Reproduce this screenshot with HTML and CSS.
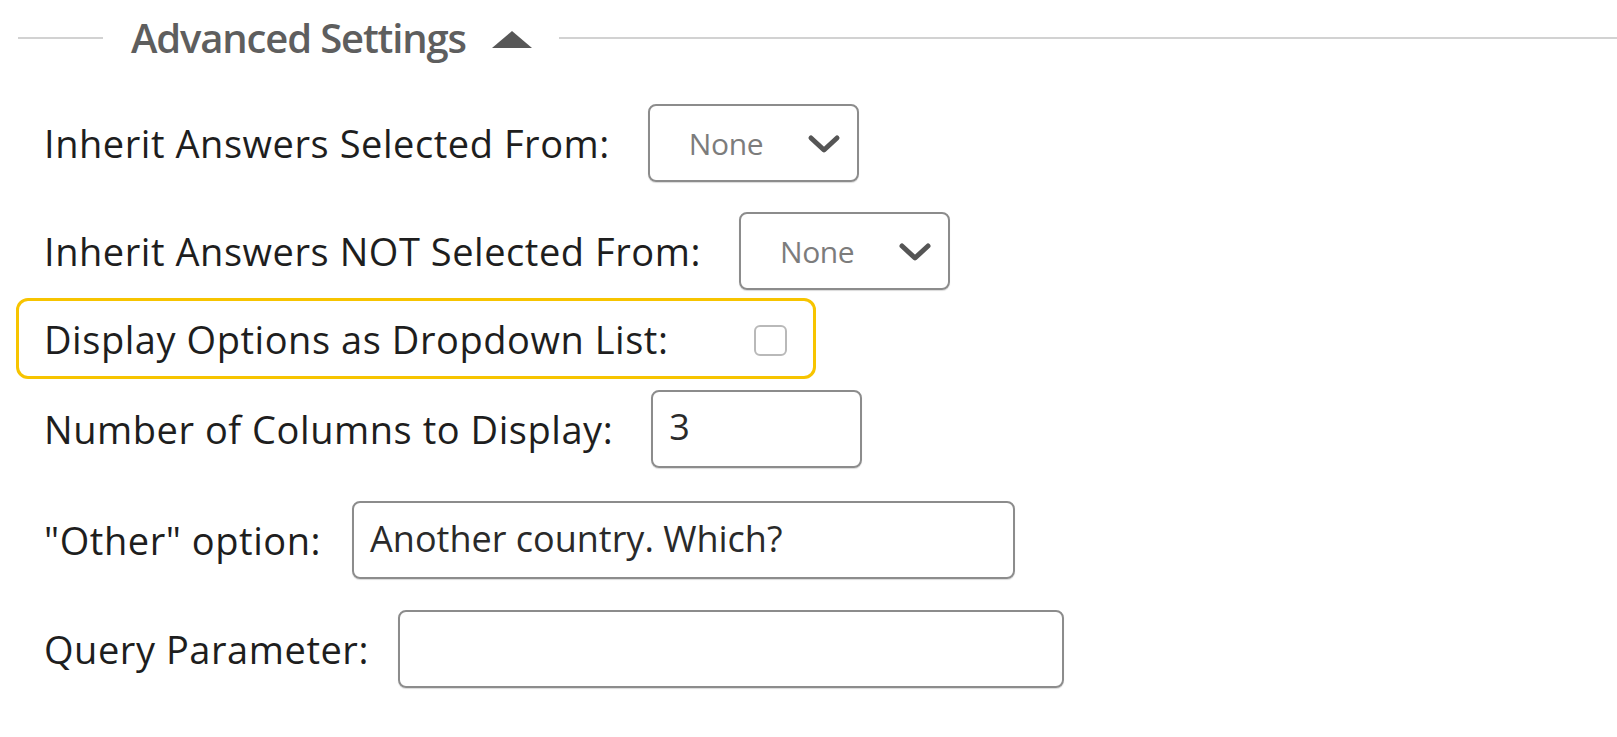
FILE: index.html
```html
<!DOCTYPE html>
<html lang="en">
<head>
<meta charset="utf-8">
<title>Advanced Settings</title>
<link rel="stylesheet" href="styles.css">
</head>
<body>
<div class="panel">
  <div class="legend">
    <span class="rule rule-short"></span>
    <span class="legend-title">Advanced Settings</span>
    <svg class="caret" width="40" height="17" viewBox="0 0 40 17"><polygon points="20,0 40,17 0,17" fill="#575757"/></svg>
    <span class="rule rule-long"></span>
  </div>

  <div class="row row-1">
    <label class="lbl">Inherit Answers Selected From:</label>
    <div class="select">
      <span class="select-text">None</span>
      <svg class="chev" width="34" height="22" viewBox="0 0 34 22"><polyline points="4,5 17,17 30,5" fill="none" stroke="#555" stroke-width="5" stroke-linecap="round" stroke-linejoin="round"/></svg>
    </div>
  </div>

  <div class="row row-2">
    <label class="lbl">Inherit Answers NOT Selected From:</label>
    <div class="select">
      <span class="select-text">None</span>
      <svg class="chev" width="34" height="22" viewBox="0 0 34 22"><polyline points="4,5 17,17 30,5" fill="none" stroke="#555" stroke-width="5" stroke-linecap="round" stroke-linejoin="round"/></svg>
    </div>
  </div>

  <div class="row row-hl">
    <label class="lbl">Display Options as Dropdown List:</label>
    <span class="check"></span>
  </div>

  <div class="row row-4">
    <label class="lbl">Number of Columns to Display:</label>
    <div class="field field-small">3</div>
  </div>

  <div class="row row-5">
    <label class="lbl">"Other" option:</label>
    <div class="field field-other">Another country. Which?</div>
  </div>

  <div class="row row-6">
    <label class="lbl">Query Parameter:</label>
    <div class="field field-query"></div>
  </div>
</div>
</body>
</html>
```

FILE: styles.css
```css
html, body {
  margin: 0;
  padding: 0;
  background: #ffffff;
}

body {
  font-family: "Open Sans", "Noto Sans", "DejaVu Sans", sans-serif;
  color: #1e1e1e;
}

.panel {
  display: flex;
  flex-direction: column;
  align-items: flex-start;
  width: 1617px;
  height: 737px;
  overflow: hidden;
}

.legend {
  display: flex;
  align-items: center;
  width: 100%;
  height: 76px;
}

.rule {
  height: 2px;
  background: #d2d2d2;
}

.rule-short {
  width: 85px;
  margin-left: 18px;
}

.rule-long {
  flex: 1;
  margin-left: 27px;
}

.legend-title {
  margin-left: 28px;
  font-size: 40px;
  font-weight: 600;
  color: #5e5e5e;
  letter-spacing: -1.15px;
  line-height: 1;
}

.caret {
  margin-left: 26px;
  margin-top: 2px;
}

.row {
  display: flex;
  align-items: center;
  padding-left: 44px;
}

.lbl {
  font-size: 38px;
  letter-spacing: 0.55px;
  line-height: 1;
  color: #1e1e1e;
  white-space: nowrap;
}

.row-1 { margin-top: 28px; }
.row-2 { margin-top: 30px; }
.row-4 { margin-top: 11px; }
.row-5 { margin-top: 33px; }
.row-6 { margin-top: 31px; }

.select {
  display: flex;
  align-items: center;
  justify-content: space-between;
  box-sizing: border-box;
  width: 211px;
  height: 78px;
  margin-left: 38px;
  padding: 0 16px 0 39px;
  border: 2px solid #8c8c8c;
  border-radius: 8px;
  box-shadow: 0 1px 1px rgba(0,0,0,0.15);
}

.select-text {
  font-size: 30px;
  color: #7c7c7c;
  letter-spacing: -0.4px;
}

.chev {
  margin-top: 2px;
}

.row-hl {
  margin-top: 8px;
  margin-left: 16px;
  padding: 0 26px 0 25px;
  height: 75px;
  border: 3px solid #f7c400;
  border-radius: 12px;
}

.check {
  box-sizing: border-box;
  width: 33px;
  height: 31px;
  margin-left: 86px;
  margin-top: 4px;
  border: 2px solid #b9b9b9;
  border-radius: 6px;
  background: #fff;
}

.field {
  box-sizing: border-box;
  height: 78px;
  display: flex;
  align-items: center;
  border: 2px solid #8c8c8c;
  border-radius: 8px;
  box-shadow: 0 1px 1px rgba(0,0,0,0.15);
  font-size: 36px;
  letter-spacing: 0;
  color: #2a2a2a;
  margin-left: 38px;
}

.field-small {
  width: 211px;
  padding-left: 16px;
  padding-bottom: 6px;
}

.field-other {
  width: 663px;
  margin-left: 31px;
  padding-left: 16px;
  padding-bottom: 4px;
}

.field-query {
  width: 666px;
  margin-left: 29px;
}
```
